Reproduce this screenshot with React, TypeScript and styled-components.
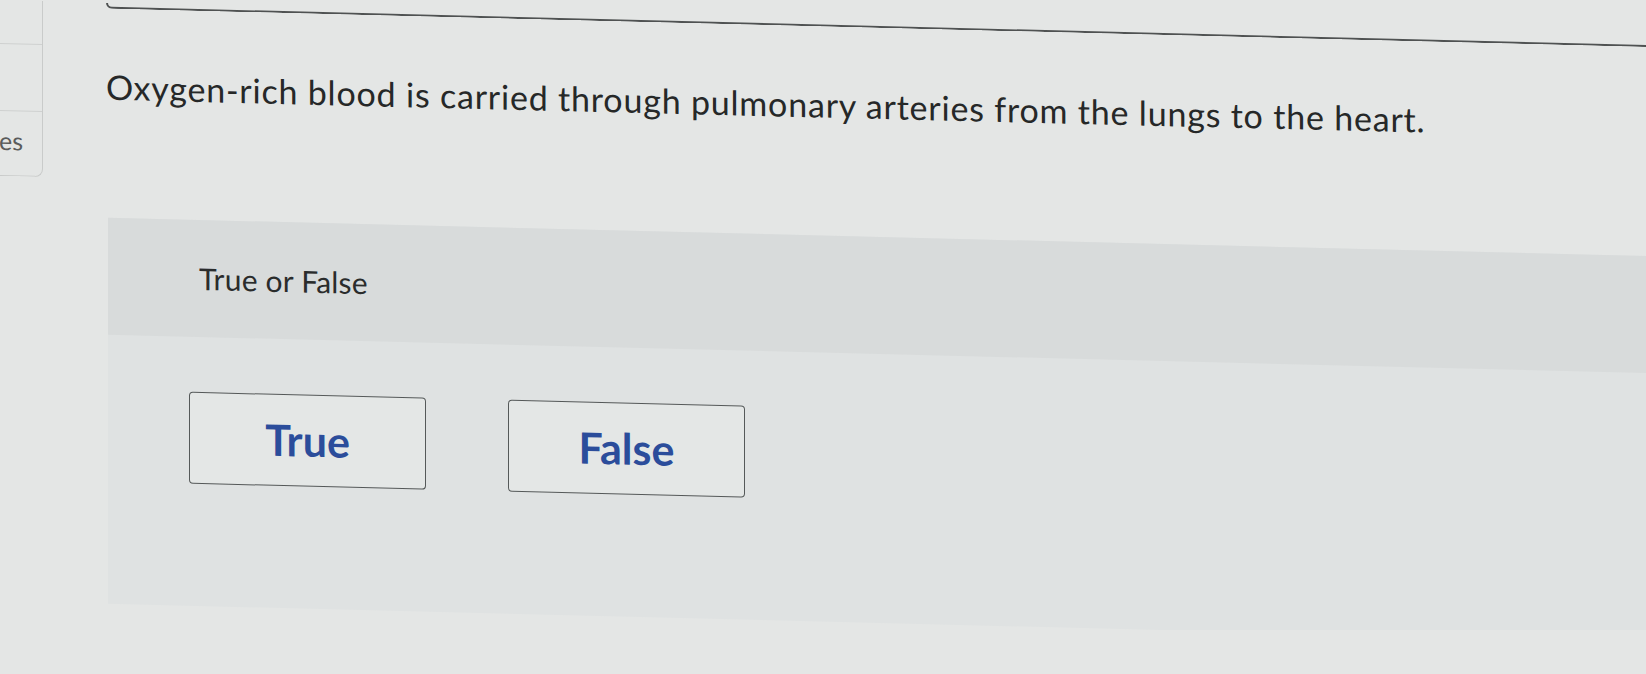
import React from "react";
import styled, { createGlobalStyle } from "styled-components";

const Global = createGlobalStyle`
  html, body { margin: 0; padding: 0; background: #e4e6e5; overflow: hidden; }
  body { font-family: "Lato", "Open Sans", sans-serif; }
`;

const Page = styled.div`
  display: flex;
  width: 1646px;
  height: 630px;
  transform: skewY(1.43deg);
  transform-origin: 0 0;
`;

const Sidebar = styled.div`
  width: 42px;
  flex: none;
  display: flex;
  flex-direction: column;
  align-self: flex-start;
  border-right: 1px solid #c9cbca;
  border-bottom: 1px solid #c9cbca;
  border-bottom-right-radius: 8px;
`;

const SideCell = styled.div<{ $h: number; $last?: boolean }>`
  height: ${(p) => p.$h}px;
  display: flex;
  align-items: center;
  border-bottom: ${(p) => (p.$last ? "none" : "1px solid #cfd1d0")};
  font-size: 25px;
  color: #5a5c5c;
  line-height: 1;
`;

const SideLabel = styled.span`
  margin-left: -1px;
  padding-bottom: 6px;
`;

const Main = styled.div`
  flex: 1;
  display: flex;
  flex-direction: column;
  padding-left: 63px;
`;

const TopCard = styled.div`
  height: 4px;
  border-left: 2px solid #4f5252;
  border-bottom: 2px solid #4f5252;
  border-bottom-left-radius: 8px;
`;

const Question = styled.p`
  margin: 58px 0 0 0;
  font-size: 34px;
  line-height: 1.2;
  color: #262828;
  letter-spacing: 0.8px;
`;

const Panel = styled.section`
  margin: 110px 0 0 2px;
  display: flex;
  flex-direction: column;
  background: #dfe2e2;
  height: 386px;
`;

const PanelHeader = styled.div`
  height: 117px;
  display: flex;
  align-items: center;
  padding-left: 91px;
  background: #d8dbdb;
  font-size: 30px;
  color: #2a2c2c;
  letter-spacing: 0.2px;
`;

const Choices = styled.div`
  display: flex;
  gap: 82px;
  padding: 55px 0 0 81px;
`;

const Choice = styled.button`
  width: 237px;
  height: 92px;
  box-sizing: border-box;
  border: 1.5px solid #555959;
  border-radius: 4px;
  background: #e4e7e6;
  color: #2b4d9b;
  font-family: "Lato", "Open Sans", sans-serif;
  font-weight: 700;
  font-size: 43px;
  display: flex;
  align-items: center;
  justify-content: center;
  padding: 0;
  cursor: pointer;
`;

export default function App() {
  return (
    <>
      <Global />
      <Page>
        <Sidebar>
          <SideCell $h={43} />
          <SideCell $h={66} />
          <SideCell $h={64} $last>
            <SideLabel>es</SideLabel>
          </SideCell>
        </Sidebar>
        <Main>
          <TopCard />
          <Question>
            Oxygen-rich blood is carried through pulmonary arteries from the
            lungs to the heart.
          </Question>
          <Panel>
            <PanelHeader>True or False</PanelHeader>
            <Choices>
              <Choice>True</Choice>
              <Choice>False</Choice>
            </Choices>
          </Panel>
        </Main>
      </Page>
    </>
  );
}
